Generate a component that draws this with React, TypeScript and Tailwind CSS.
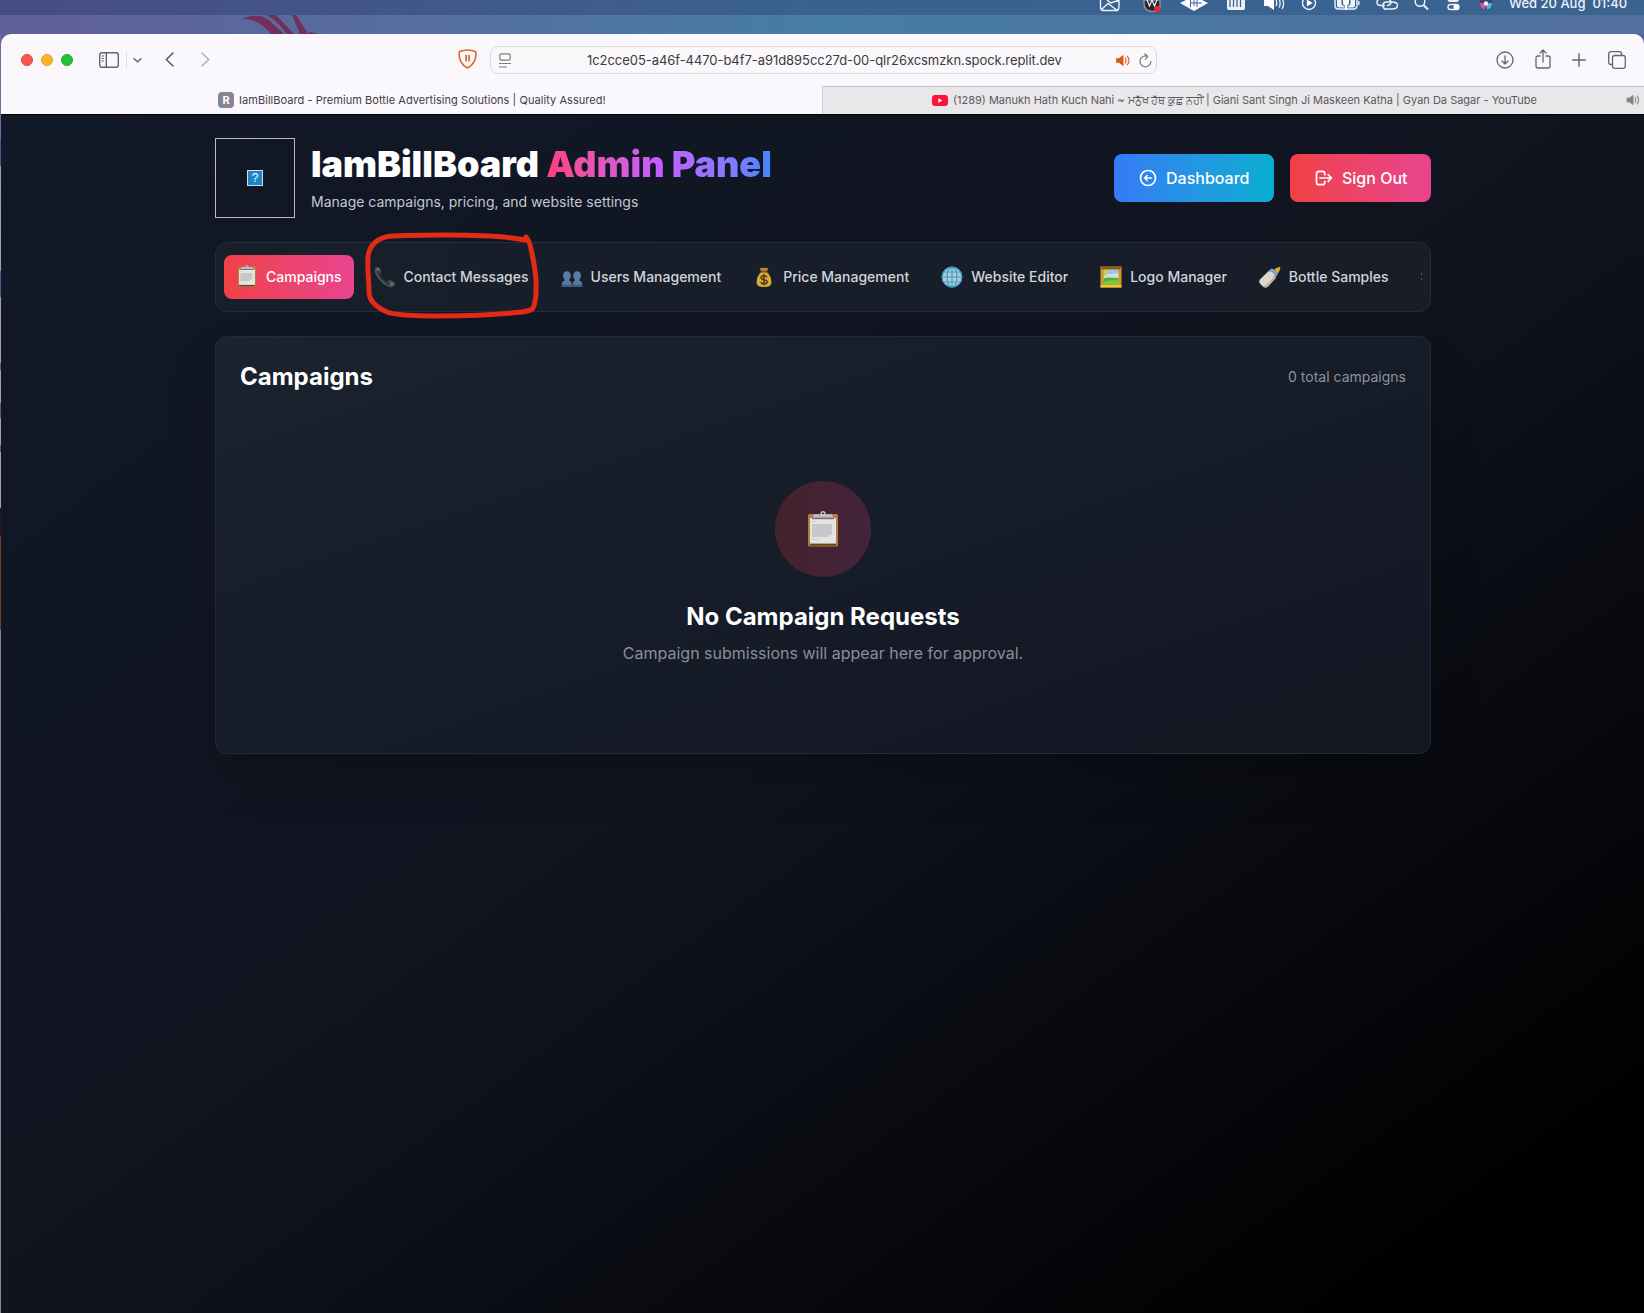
import React from "react";

type P = { className?: string };

function Clipboard({ className = "" }: P) {
  return (
    <svg viewBox="0 0 32 36" className={className}>
      <rect x="1" y="3" width="30" height="32.5" rx="1.6" fill="#b07f3f" />
      <rect x="3" y="32.5" width="26" height="2.2" fill="#6a4520" />
      <rect x="3" y="7" width="26" height="25.5" fill="#e4e4e4" />
      <path d="M5 13h19.500l.8 4-.6 3 .6 3-4 1.500-.5 1.500H5z" fill="#c8c8c8" />
      <path d="M5 10.500h5M5 28.500h6" stroke="#cdcdcd" strokeWidth="1" />
      <path d="M7 3.200h18l2 4.500H5z" fill="#b9bec6" />
      <path d="M5 7.400h22" stroke="#77736c" strokeWidth="1.600" />
      <circle cx="16" cy="2.600" r="1.900" fill="none" stroke="#c5c9d2" strokeWidth="1.400" />
    </svg>
  );
}
function Phone({ className = "" }: P) {
  return (
    <svg viewBox="0 0 22 22" className={className}>
      <path d="M1.200 2.200C2.300.8 4.600.6 5.600 2l1.600 3c.5 1-.6 2-1.300 2.800 1.200 3.300 4.600 6.700 7.600 7.900.9-.8 1.900-2 3.100-1.500l3.900 2c1.300.9.9 2.900-.4 4-1.600 1.300-4.300 1.300-6.600.2C8 17.800 2.700 11.900.9 6.500.4 5 .3 3.300 1.200 2.200z" fill="#4a4d52" />
      <path d="M3.600 4.200c1 5.500 6.700 12.300 12.600 13.600" stroke="#23262b" strokeWidth="1.300" fill="none" />
      <circle cx="3.900" cy="3.600" r="1.500" fill="#6a6d72" />
      <circle cx="17.500" cy="18" r="1.500" fill="#6a6d72" />
    </svg>
  );
}
function Users({ className = "" }: P) {
  return (
    <svg viewBox="0 0 22 22" className={className}>
      <g fill="#5a7ca2">
        <path d="M2 9.500C2 6.800 3.500 5.200 5.900 5.200s3.900 1.600 3.900 4.300c0 1.800-.7 3.200-1.500 4v1.300c1.100.6 2.500 1.200 2.500 3.200v3H.8v-3c0-2 1.600-2.600 2.700-3.200v-1.300C2.700 12.700 2 11.300 2 9.500z" />
        <path d="M12.200 9.500c0-2.700 1.500-4.300 3.900-4.300S20 6.800 20 9.500c0 1.800-.7 3.200-1.500 4v1.300c1.100.6 2.700 1.200 2.700 3.200v3H11.700v-3c0-2 .9-2.600 2-3.200v-1.300c-.8-.8-1.500-2.200-1.500-4z" />
      </g>
      <path d="M.8 18.500h10v2.500H.8zM11.700 18.500h9.500v2.500h-9.500z" fill="#3e5f86" />
    </svg>
  );
}
function MoneyBag({ className = "" }: P) {
  return (
    <svg viewBox="0 0 22 22" className={className}>
      <path d="M6.500 1.800c1.500.8 2.500-.4 4.500.2 2-.6 3 .4 4.500-.2L13.600 6H8.400z" fill="#b9812c" />
      <path d="M8.200 6h5.600c3 2.500 4.800 7 4.600 10.500-.2 3.200-2.400 4.500-7.400 4.500s-7.200-1.300-7.400-4.500C3.400 13 5.200 8.500 8.200 6z" fill="#dba937" />
      <path d="M7.800 5.800h6.400" stroke="#7c4d15" strokeWidth="1.500" />
      <path d="M14 11.300c-.5-1.100-1.700-1.500-3-1.500-1.700 0-2.900.7-2.900 2 0 2.900 6 1.200 6 4 0 1.300-1.300 2.100-3.100 2.100-1.500 0-2.700-.6-3.200-1.800M11 8.300v11.100" stroke="#4d3a18" strokeWidth="1.500" fill="none" />
    </svg>
  );
}
function Globe({ className = "" }: P) {
  return (
    <svg viewBox="0 0 22 22" className={className}>
      <circle cx="11" cy="11" r="10.300" fill="#b7cbd6" />
      <g stroke="#3b9fc6" strokeWidth="1.200" fill="none">
        <circle cx="11" cy="11" r="9.800" />
        <ellipse cx="11" cy="11" rx="5" ry="9.800" />
        <path d="M11 1v20M1 11h20M2.800 6h16.400M2.800 16h16.400" />
      </g>
    </svg>
  );
}
function Picture({ className = "" }: P) {
  return (
    <svg viewBox="0 0 22 22" className={className}>
      <rect x=".5" y=".5" width="21" height="21" fill="#d39b20" />
      <rect x="1.500" y="1" width="19" height="2.500" fill="#8c5a17" />
      <rect x=".5" y="19" width="21" height="2.500" fill="#edc52e" />
      <rect x="3.600" y="3.600" width="14.800" height="14.800" fill="#8fcbea" />
      <circle cx="6" cy="6" r="2.200" fill="#efc62c" />
      <path d="M4 10.500c1-2 3-1.500 4-2.500 2-.8 2 1 4 0 2-1.500 4-.5 6.400-.6v4.500H4z" fill="#d5dde1" />
      <path d="M3.600 12.500c4-1.500 10-1 14.800-.5v6.400H3.600z" fill="#55ae35" />
      <path d="M3.600 16c5-2.500 9-1 14.800-2v4.400H3.600z" fill="#82c63d" />
    </svg>
  );
}
function Bottle({ className = "" }: P) {
  return (
    <svg viewBox="0 0 22 22" className={className}>
      <path d="M14.500 4.500c1.200-.6 1.600-2.100 3-2.400.8-.2 1.700-1.300 3.200-1.400.9 0 .8 1.200.2 2.700-.4 1-.3 1.500-1 2.400-.7 1-.9 1.600-1.600 2.500z" fill="#e0a52e" />
      <path d="M9.900 4.600l2.800-2.400c2.400.8 5.200 3.400 6.200 5.900l-2.200 2.900z" fill="#6fa8c9" />
      <path d="M9.600 4.900c3.200.5 6.600 3.700 7.200 7L8.800 20.800c-1.300 1.200-3.500 1-5.200-.5L1.300 18c-1.300-1.500-1.300-3.400-.1-4.700z" fill="#ddd6cc" />
      <path d="M16.800 11.900L8.800 20.800c-1.300 1.200-3.500 1-5.200-.5 4-.5 9.300-5.600 11.300-10.800z" fill="#beb1a1" />
    </svg>
  );
}
function Gear({ className = "" }: P) {
  return (
    <svg viewBox="0 0 22 22" className={className}>
      <circle cx="11" cy="11" r="7" fill="none" stroke="#8b9098" strokeWidth="3" />
      <path d="M.5 7h2.500v2H.5zM.5 12h2.500v2H.5zM19 7h2.500v2H19zM19 12h2.500v2H19z" fill="#8b9098" />
    </svg>
  );
}
function Speaker({ className = "" }: P) {
  return (
    <svg viewBox="0 0 16 14" className={className}>
      <path d="M0 4.500h3L8 .8v12.400L3 9.500H0z" fill="currentColor" />
      <path d="M10 4.500c1 1.500 1 3.500 0 5M12.300 2.500c2 2.700 2 6.300 0 9" stroke="currentColor" strokeWidth="1.200" fill="none" strokeLinecap="round" />
    </svg>
  );
}

const tabs: [string, (p: P) => React.JSX.Element][] = [
  ["Campaigns", Clipboard],
  ["Contact Messages", Phone],
  ["Users Management", Users],
  ["Price Management", MoneyBag],
  ["Website Editor", Globe],
  ["Logo Manager", Picture],
  ["Bottle Samples", Bottle],
  ["", Gear],
];

function MenuBar() {
  return (
    <div className="relative h-[15px] overflow-hidden bg-gradient-to-r from-[#464c84] via-[#3a6291] to-[#3b6390]">
      <svg className="absolute top-0 left-[1096px] h-[15px] w-[404px]" viewBox="1096 0 404 15" fill="none" stroke="#eef2f7" strokeWidth="1.400">
        <path d="M1100.500 0v7q0 3.500 3 3.500h12q3.500 0 3.500-3.500V0M1101 10l7-6.500 6 4.500 4 3M1107 0l4 3 8-3" />
        <path d="M1144 0v3q0 8.500 8.500 8.500T1160 3V0z" fill="#26282e" stroke="#8d98a5" />
        <path d="M1147 0l2.500 6 2.500-6 2.500 6 2.500-6" strokeWidth="1.200" />
        <circle cx="1157" cy="9" r="2.900" fill="#ff1f30" stroke="none" />
        <path d="M1180 3l14-7 14 7-14 8z" fill="#fff" stroke="none" />
        <path d="M1190.500 0v7M1197 0v7M1190 3h12M1194 0v6" stroke="#3a6291" strokeWidth="1" />
        <path d="M1227 0h18v8q0 2-2 2h-14q-2 0-2-2z" fill="#eef2f7" stroke="none" />
        <path d="M1230 0v7M1233.500 0v7M1237 0v7M1240.500 0v7" stroke="#3a6291" strokeWidth="1.300" />
        <path d="M1264 0h4l6-3v13l-6-4h-4z" fill="#fff" stroke="none" />
        <path d="M1276 0c1 2 1 4 0 6M1279 -1c1.500 3 1.500 6 0 8.500M1282 -2c2 4 2 8 0 11" strokeWidth="1.300" />
        <circle cx="1309" cy="3" r="6.500" />
        <path d="M1306.800-.5l6 3.500-6 3.500z" fill="#fff" stroke="none" />
        <path d="M1335 0v5.500q0 3.500 3.500 3.500h15q3.500 0 3.500-3.500V0M1358.800 1v4" />
        <path d="M1337 0h4.500v3q0 2.500 3 3v1.500h-5.500q-2 0-2-2zM1355 0h-4.500v3q0 2.500-3 3v1.500h5.500q2 0 2-2z" fill="#eef2f7" stroke="none" />
        <path d="M1343 0h6v3q0 2-2 2.500v4.500h-2V5.500q-2-.5-2-2.500z" fill="#fff" stroke="none" />
        <path d="M1385 5.500h-4q-4 0-4-3.200T1381-1h4M1384 9h8q5.500 0 5.500-3.500T1392 2h-5q-4 0-4 3.500T1386 9M1388-1q3 1 3 3.500T1387 5.500" />
        <circle cx="1420" cy="1.500" r="4.800" />
        <path d="M1423.500 5l4.500 4.500" strokeWidth="2" />
        <rect x="1447.500" y="-3" width="11.500" height="5" rx="2.500" fill="#eef2f7" stroke="none" />
        <rect x="1448" y="4.500" width="11" height="5" rx="2.500" />
        <circle cx="1456" cy="7" r="2.600" fill="#fff" stroke="none" />
        <circle cx="1486" cy="3.500" r="6.300" fill="#3d4270" stroke="none" />
        <path d="M1480 3a6.300 6.300 0 0 0 5 6.500l1-6z" fill="#e0518d" stroke="none" />
        <path d="M1492 3a6.300 6.300 0 0 1-5 6.500l-1-6z" fill="#43c1d8" stroke="none" />
        <circle cx="1486" cy="3.500" r="2.200" fill="#f4eefa" stroke="none" />
      </svg>
      <div className="absolute top-[-7px] left-[1509px] text-[13px] leading-5 font-medium whitespace-pre text-[#eef2f7]">Wed 20 Aug  01:40</div>
    </div>
  );
}

function Toolbar() {
  return (
    <div className="flex h-[52px] items-center">
      <div className="flex gap-2 pl-5">
        <span className="size-3 rounded-full border border-[#e0443e] bg-[#ff5650]" />
        <span className="size-3 rounded-full border border-[#dea123] bg-[#fdb22b]" />
        <span className="size-3 rounded-full border border-[#1aab29] bg-[#24c138]" />
      </div>
      <svg className="ml-[25.5px] h-4 w-5 shrink-0" viewBox="0 0 20 16" fill="none" stroke="#666468" strokeWidth="1.400">
        <rect x=".7" y=".7" width="18.600" height="14.600" rx="2.200" />
        <path d="M7.300 1v14" />
        <path d="M2.600 4h2.400M2.600 6.500h2.400M2.600 9h2.400" strokeWidth="1" />
      </svg>
      <span className="ml-[7px] h-[18px] w-px bg-[#e2e0e4]" />
      <svg className="ml-[6px] h-[5px] w-[9px] shrink-0" viewBox="0 0 9 5" fill="none" stroke="#666468" strokeWidth="1.500"><path d="M1 .8l3.500 3L8 .8" strokeLinecap="round" /></svg>
      <svg className="ml-[23.5px] h-[15px] w-[9px] shrink-0 -translate-y-px" viewBox="0 0 9 15" fill="none" stroke="#5c5a5e" strokeWidth="1.600" strokeLinecap="round" strokeLinejoin="round"><path d="M8 1L1.300 7.500 8 14" /></svg>
      <svg className="ml-[27px] h-[15px] w-[9px] shrink-0 -translate-y-px" viewBox="0 0 9 15" fill="none" stroke="#b3b1b5" strokeWidth="1.600" strokeLinecap="round" strokeLinejoin="round"><path d="M1 1l6.700 6.500L1 14" /></svg>
      <svg className="ml-[248px] h-5 w-[19px] shrink-0 -translate-y-px" viewBox="0 0 19 20" fill="none" stroke="#df6526" strokeWidth="1.600" strokeLinejoin="round">
        <path d="M9.500 1C12.500 1 16 1.700 17.600 2.700 18.800 9.500 15.500 16 9.500 19 3.500 16 .2 9.500 1.400 2.700 3 1.700 6.500 1 9.500 1z" />
        <path d="M8.100 6v6.500M11 6v6.500" strokeWidth="1.700" />
      </svg>
      <div className="ml-[13px] flex h-7 w-[667px] shrink-0 items-center rounded-lg border border-[#dcdadd] bg-[#faf8fb] pl-2">
        <svg className="h-[15px] w-3 shrink-0" viewBox="0 0 12 15" fill="none" stroke="#7d7b7f" strokeWidth="1.200">
          <rect x=".8" y=".8" width="10.400" height="6.400" rx="1.500" />
          <path d="M0 10.500h12M0 14h8" />
        </svg>
        <div className="ml-[76px] w-[476px] translate-y-[0.5px] text-[13px] tracking-[-0.055px] whitespace-nowrap text-[#3c3a3e]">1c2cce05-a46f-4470-b4f7-a91d895cc27d-00-qlr26xcsmzkn.spock.replit.dev</div>
        <Speaker className="ml-[53px] h-[13px] w-[15px] shrink-0 text-[#d95c14]" />
        <svg className="ml-2 h-[15px] w-[13px] shrink-0" viewBox="0 0 13 15" fill="none" stroke="#7d7b7f" strokeWidth="1.200" strokeLinecap="round" strokeLinejoin="round">
          <path d="M11.800 8.300A5.400 5.400 0 1 1 8.500 3.400M5.800.8l3 2.600-2.500 3" />
        </svg>
      </div>
      <div className="ml-auto flex items-center gap-[21px] pr-[18px] text-[#666468]">
        <svg className="size-[18px] -translate-x-px" viewBox="0 0 18 18" fill="none" stroke="currentColor" strokeWidth="1.300" strokeLinecap="round" strokeLinejoin="round"><circle cx="9" cy="9" r="8" /><path d="M9 4.800v8M6 10l3 3 3-3" /></svg>
        <svg className="-mt-0.5 h-5 w-4 -translate-x-px" viewBox="0 0 16 20" fill="none" stroke="currentColor" strokeWidth="1.300" strokeLinecap="round" strokeLinejoin="round"><path d="M5 7H3Q1 7 1 9v8q0 2 2 2h10q2 0 2-2V9q0-2-2-2h-2M8 13V1M5 4l3-3 3 3" /></svg>
        <svg className="size-[14px] -translate-x-px" viewBox="0 0 14 14" fill="none" stroke="currentColor" strokeWidth="1.400" strokeLinecap="round"><path d="M7 .7v12.600M.7 7h12.600" /></svg>
        <svg className="size-[18px]" viewBox="0 0 18 18" fill="none" stroke="currentColor" strokeWidth="1.300" strokeLinejoin="round"><rect x="4.500" y="4.500" width="12.800" height="12.800" rx="2.300" /><path d="M4.500 13.500H3q-2.300 0-2.300-2.300V3Q.7.700 3 .7h8.200q2.300 0 2.300 2.300v1.500" /></svg>
      </div>
    </div>
  );
}

function TabStrip() {
  return (
    <div className="flex h-7 text-[11px] whitespace-nowrap text-[#4a484c]">
      <div className="flex w-[821px] items-center pl-[217px]">
        <span className="flex size-4 items-center justify-center rounded bg-[#868594] text-[11px] font-bold text-white">R</span>
        <span className="ml-[5px] tracking-[0.05px] text-[#3f3d41]">IamBillBoard - Premium Bottle Advertising Solutions | Quality Assured!</span>
      </div>
      <div className="flex flex-1 items-center border-l border-[#d3d1d4] bg-[#e9e7ea] pl-[109px] shadow-[inset_0_1px_0_#c3c1c4]">
        <svg className="h-[11px] w-4 shrink-0" viewBox="0 0 16 11"><rect width="16" height="11" rx="3" fill="#ff1438" /><path d="M6.300 3.200v4.600l4-2.300z" fill="#fff" /></svg>
        <span className="ml-[5px] w-[585px] text-[#5b595d]">(1289) Manukh Hath Kuch Nahi ~ <span className="tracking-[-0.1px]">ਮਨੁੱਖ ਹੱਥ ਕੁਛ ਨਹੀਂ</span> | Giani Sant Singh Ji Maskeen Katha | Gyan Da Sagar - YouTube</span>
        <Speaker className="mr-[3px] ml-auto h-3 w-[15px] shrink-0 text-[#858387]" />
      </div>
    </div>
  );
}

function AdminHeader() {
  return (
    <header className="flex items-center justify-between">
      <div className="flex items-center gap-4">
        <div className="flex size-20 items-center justify-center border border-[#b9bcc2]">
          <div className="flex h-4 w-4 items-center justify-center border border-[#c9dff0] bg-[#1e86c6] font-['Liberation_Sans'] text-[12px] leading-none text-white">?</div>
        </div>
        <div>
          <h1 className="text-4xl leading-10 font-black text-white">
            IamBillBoard <span className="bg-gradient-to-r from-[#ff3d78] via-[#c65cff] to-[#3f86ff] bg-clip-text text-transparent">Admin Panel</span>
          </h1>
          <p className="mt-2 text-sm text-[#c4c8d0]">Manage campaigns, pricing, and website settings</p>
        </div>
      </div>
      <div className="flex gap-4">
        <button className="flex h-12 w-40 items-center rounded-lg bg-gradient-to-r from-[#357af5] to-[#06aed0] pl-6 font-medium text-white">
          <svg className="mr-2 size-5" fill="none" stroke="currentColor" viewBox="0 0 24 24" strokeWidth="2" strokeLinecap="round" strokeLinejoin="round"><path d="M11 15l-3-3m0 0l3-3m-3 3h8M3 12a9 9 0 1118 0 9 9 0 01-18 0z" /></svg>
          Dashboard
        </button>
        <button className="flex h-12 w-[141px] items-center rounded-lg bg-gradient-to-r from-[#ef4143] to-[#e9438f] pl-6 font-medium text-white">
          <svg className="mr-2 size-5" fill="none" stroke="currentColor" viewBox="0 0 24 24" strokeWidth="2" strokeLinecap="round" strokeLinejoin="round"><path d="M17 16l4-4m0 0l-4-4m4 4H7m6 4v1a3 3 0 01-3 3H6a3 3 0 01-3-3V7a3 3 0 013-3h4a3 3 0 013 3v1" /></svg>
          Sign Out
        </button>
      </div>
    </header>
  );
}

export default function App() {
  return (
    <div className="h-[1313px] w-[1644px] overflow-hidden bg-[#9c9ea2] font-['Inter',sans-serif]">
      <MenuBar />
      <div className="h-[19px] bg-gradient-to-r from-[#605f98] via-[#467da5] to-[#526f9f]">
        <svg className="ml-[242px] h-[19px] w-[76px]" viewBox="0 0 76 19" fill="#702f5c">
          <path d="M0 4C12-2 24 1 30 8l12 11H29C21 9 12 4 0 4zM25 0h9l18 19h-7C38 10 33 5 25 0zM50 0h4l11 17-7 2z" />
          <path d="M58 18l4-2 3 2 4-1 6 2H56z" />
        </svg>
      </div>
      <div className="flex h-[1279px] bg-[#56649a]">
        <div className="flex w-px flex-col">
          <div className="h-[105px] bg-[#77679f]" />
          <div className="h-[27px] bg-[#41618c]" />
          <div className="h-[105px] bg-[#9fa1a3]" />
          <div className="h-[26px] bg-[#4f5b8c]" />
          <div className="h-[66px] bg-[#a2a19f]" />
          <div className="h-[7px] bg-[#615782]" />
          <div className="h-[33px] bg-[#9fa1a3]" />
          <div className="h-[15px] bg-[#615782]" />
          <div className="h-[27px] bg-[#9fa1a3]" />
          <div className="h-[7px] bg-[#615782]" />
          <div className="h-[56px] bg-[#9fa1a3]" />
          <div className="h-[28px] bg-[#29151a]" />
          <div className="h-[94px] bg-[#7b3b30]" />
          <div className="flex-1 bg-[#85888c]" />
        </div>
        <div className="flex w-[1643px] flex-col overflow-hidden rounded-t-[10px] bg-[#faf8fc]">
          <Toolbar />
          <TabStrip />
          <main className="flex-1 border-t border-black bg-linear-to-br/srgb from-[#111827] from-0% via-[#11141f] via-50% to-black to-92% pt-[23px] pr-[213px] pl-[214px]">
            <AdminHeader />
            <nav className="relative mt-6 h-[70px] rounded-xl border border-[#242e3b] bg-gradient-to-r from-[#171f2b] to-[#181d28] px-2 py-3">
              <div className="flex gap-2 overflow-hidden">
                {tabs.map(([label, Icon], i) => (
                  <button key={label} className={i === 0 ? "flex h-11 shrink-0 items-center rounded-lg bg-gradient-to-r from-[#ef4143] to-[#e9438f] px-3 text-sm font-medium text-white" : "flex h-11 shrink-0 items-center rounded-lg px-3 text-sm font-medium text-gray-300"}>
                    <Icon className={i === 0 ? "mr-2 h-[22px] w-[22px] -translate-y-px" : "mr-2 size-[22px]"} />
                    {label}
                  </button>
                ))}
              </div>
              <svg className="absolute top-[-13px] left-[146px] h-[90px] w-[180px]" viewBox="363 230 180 90" fill="none" stroke="#e22a17" strokeWidth="5" strokeLinecap="round" strokeLinejoin="round">
                <path d="M527 237c3 3 4 7 5 12 3 13 6 27 5 41 0 6-1 14-3 18-3 4-12 4-22 5-18 2-44 3-74 3-18 0-40 0-50-4-9-4-18-11-18-20 0-12-2-25-1-35 1-12 10-20 24-21 30-1 100-3 133 4" />
              </svg>
            </nav>
            <section className="mt-6 h-[418px] rounded-xl border border-[#202b36] bg-gradient-to-br from-[#1a232e] via-[#161c28] to-[#121722] p-6 shadow-[0_25px_50px_-12px_rgba(0,0,0,0.25)]">
              <div className="flex items-center justify-between">
                <h2 className="text-2xl font-bold text-white">Campaigns</h2>
                <span className="text-sm text-[#8e939e]">0 total campaigns</span>
              </div>
              <div className="mt-6 flex flex-col items-center py-16">
                <div className="flex size-24 items-center justify-center rounded-full bg-gradient-to-r from-[#44222c] to-[#43233d]">
                  <Clipboard className="h-9 w-8" />
                </div>
                <h3 className="mt-6 text-2xl font-bold text-white">No Campaign Requests</h3>
                <p className="mt-2 text-base text-[#8a8e9a]">Campaign submissions will appear here for approval.</p>
              </div>
            </section>
          </main>
        </div>
      </div>
    </div>
  );
}
